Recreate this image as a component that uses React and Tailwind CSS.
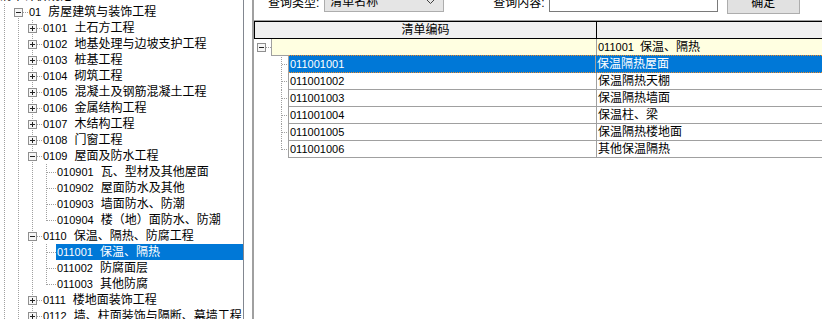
import React from "react";

const DOT = "#a0a0a0";

const tree = [
  { lv: 1, code: "01", name: "房屋建筑与装饰工程", box: "minus" },
  { lv: 2, code: "0101", name: "土石方工程", box: "plus" },
  { lv: 2, code: "0102", name: "地基处理与边坡支护工程", box: "plus" },
  { lv: 2, code: "0103", name: "桩基工程", box: "plus" },
  { lv: 2, code: "0104", name: "砌筑工程", box: "plus" },
  { lv: 2, code: "0105", name: "混凝土及钢筋混凝土工程", box: "plus" },
  { lv: 2, code: "0106", name: "金属结构工程", box: "plus" },
  { lv: 2, code: "0107", name: "木结构工程", box: "plus" },
  { lv: 2, code: "0108", name: "门窗工程", box: "plus" },
  { lv: 2, code: "0109", name: "屋面及防水工程", box: "minus" },
  { lv: 3, code: "010901", name: "瓦、型材及其他屋面" },
  { lv: 3, code: "010902", name: "屋面防水及其他" },
  { lv: 3, code: "010903", name: "墙面防水、防潮" },
  { lv: 3, code: "010904", name: "楼（地）面防水、防潮", last: true },
  { lv: 2, code: "0110", name: "保温、隔热、防腐工程", box: "minus" },
  { lv: 3, code: "011001", name: "保温、隔热", selected: true },
  { lv: 3, code: "011002", name: "防腐面层" },
  { lv: 3, code: "011003", name: "其他防腐", last: true },
  { lv: 2, code: "0111", name: "楼地面装饰工程", box: "plus" },
  { lv: 2, code: "0112", name: "墙、柱面装饰与隔断、幕墙工程", box: "plus" },
];

const items = [
  { code: "011001001", name: "保温隔热屋面", selected: true },
  { code: "011001002", name: "保温隔热天棚" },
  { code: "011001003", name: "保温隔热墙面" },
  { code: "011001004", name: "保温柱、梁" },
  { code: "011001005", name: "保温隔热楼地面" },
  { code: "011001006", name: "其他保温隔热", last: true },
];

// expand / collapse box, 9x9 with its sign
const Box = ({ x, y, type }) => (
  <g>
    <rect x={x + 0.5} y={y + 0.5} width="8" height="8" fill="#f6f6f6" stroke="#8f8f8f" />
    <line x1={x + 2} y1={y + 4.5} x2={x + 7} y2={y + 4.5} stroke="#222" />
    {type === "plus" && <line x1={x + 4.5} y1={y + 2} x2={x + 4.5} y2={y + 7} stroke="#222" />}
  </g>
);

const Guides = ({ lv, box, last }) => {
  const w = (lv + 1) * 14;
  const lines = [];
  for (let c = 0; c <= lv; c++) {
    let y1 = 0;
    let y2 = 16;
    if (c === lv && lv === 1) y1 = 8;
    if (c === lv && lv === 3 && last) y2 = 9;
    lines.push(
      <line key={c} x1={c * 14 + 4.5} y1={y1} x2={c * 14 + 4.5} y2={y2} stroke={DOT} strokeDasharray="1 1" />
    );
  }
  return (
    <svg width={w} height="16" className="shrink-0">
      {lines}
      <line x1={lv * 14 + 5} y1="8.5" x2={lv * 14 + 14} y2="8.5" stroke={DOT} strokeDasharray="1 1" />
      {box && <Box x={lv * 14} y={4} type={box} />}
    </svg>
  );
};

const TreeRow = ({ row }) => (
  <div className="flex h-[16px] items-stretch">
    <Guides lv={row.lv} box={row.box} last={row.last} />
    <div
      className={`flex items-center whitespace-nowrap pl-px ${
        row.selected ? "flex-1 bg-[#0078d7] text-white" : "text-black"
      }`}
    >
      <span className="text-[11px] leading-[16px]">{row.code}</span>
      <span className="ml-[7px] text-[12px] leading-[16px]">{row.name}</span>
    </div>
  </div>
);

export default function App() {
  return (
    <div className="flex h-[319px] w-[822px] overflow-hidden bg-white font-['Liberation_Sans','Noto_Sans_CJK_SC',sans-serif] text-black">
      {/* left tree */}
      <div className="w-[244px] shrink-0 overflow-hidden border-r border-[#828790]">
        <div className="-mt-[12px]">
          <div className="flex h-[16px] items-center whitespace-nowrap text-[12px] leading-[16px]">
            清单计价规范
          </div>
          {tree.map((row) => (
            <TreeRow key={row.code} row={row} />
          ))}
        </div>
      </div>

      <div className="w-[8px] shrink-0" />

      {/* right panel */}
      <div className="flex min-w-0 flex-1 flex-col border-l-2 border-[#a0a0a0]">
        <div className="-mt-[10px] flex h-[24px] shrink-0 items-start text-[12px]">
          <span className="ml-[14px] mt-[2px] flex h-[21px] items-center">查询类型:</span>
          <div className="ml-[5px] mt-px flex h-[21px] w-[120px] items-center border border-[#adadad] bg-[#e5e5e5] px-[5px]">
            <span className="mt-px">清单名称</span>
            <svg width="9" height="5" className="ml-auto mr-[3px]">
              <polyline points="0.5,0.5 4.5,4.5 8.5,0.5" fill="none" stroke="#404040" />
            </svg>
          </div>
          <span className="ml-[49px] mt-[2px] flex h-[21px] items-center">查询内容:</span>
          <div className="ml-[4px] mt-px h-[21px] w-[169px] border border-[#7a7a7a] bg-white" />
          <div className="ml-[9px] mt-px flex h-[23px] w-[73px] items-center justify-center border border-[#adadad] bg-[#e1e1e1]">
            确定
          </div>
        </div>

        <div className="mt-[6px] h-px shrink-0 bg-[#a0a0a0]" />
        <div className="flex h-[18px] shrink-0 border-y border-l border-black bg-[#f0f0f0] text-[12px]">
          <div className="flex w-[341px] shrink-0 items-center justify-center">清单编码</div>
          <div className="flex-1 border-l border-black" />
        </div>

        {/* group row */}
        <div className="flex h-[17px] shrink-0">
          <svg width="17" height="17" className="shrink-0">
            <line x1="12" y1="8.5" x2="17" y2="8.5" stroke={DOT} strokeDasharray="1 1" />
            <Box x={3} y={4} type="minus" />
          </svg>
          <div className="flex flex-1 border-b border-l border-[#a0a0a0] bg-[#ffffe1]">
            <div className="w-[324px] shrink-0" />
            <div className="flex flex-1 items-center whitespace-nowrap border-l border-[#a0a0a0] pl-px">
              <span className="text-[11px]">011001</span>
              <span className="ml-[6px] text-[12px]">保温、隔热</span>
            </div>
          </div>
        </div>

        {items.map((it) =>
          it.selected ? (
            <div key={it.code} className="-mt-px flex h-[18px] shrink-0">
              <svg width="34" height="18" className="shrink-0">
                <line x1="27.5" y1="0" x2="27.5" y2="18" stroke={DOT} strokeDasharray="1 1" />
                <line x1="28" y1="9.5" x2="34" y2="9.5" stroke={DOT} strokeDasharray="1 1" />
              </svg>
              <div className="flex flex-1 border-l border-[#a0a0a0]">
                <div className="flex flex-1 border-y border-dotted border-[#f08a24] bg-[#0078d7] text-white">
                  <div className="flex w-[306px] shrink-0 items-center pl-px text-[11px]">{it.code}</div>
                  <div className="flex flex-1 items-center border-l border-solid border-[#a0a0a0] pl-px text-[12px]">
                    {it.name}
                  </div>
                </div>
              </div>
            </div>
          ) : (
            <div key={it.code} className="flex h-[17px] shrink-0">
              <svg width="34" height="17" className="shrink-0">
                <line x1="27.5" y1="0" x2="27.5" y2={it.last ? 9 : 17} stroke={DOT} strokeDasharray="1 1" />
                <line x1="28" y1="8.5" x2="34" y2="8.5" stroke={DOT} strokeDasharray="1 1" />
              </svg>
              <div className="flex flex-1 border-b border-l border-[#a0a0a0]">
                <div className="flex w-[307px] shrink-0 items-center pl-px text-[11px]">{it.code}</div>
                <div className="flex flex-1 items-center whitespace-nowrap border-l border-[#a0a0a0] pl-px text-[12px]">
                  {it.name}
                </div>
              </div>
            </div>
          )
        )}
        <div className="flex-1" />
      </div>
    </div>
  );
}
